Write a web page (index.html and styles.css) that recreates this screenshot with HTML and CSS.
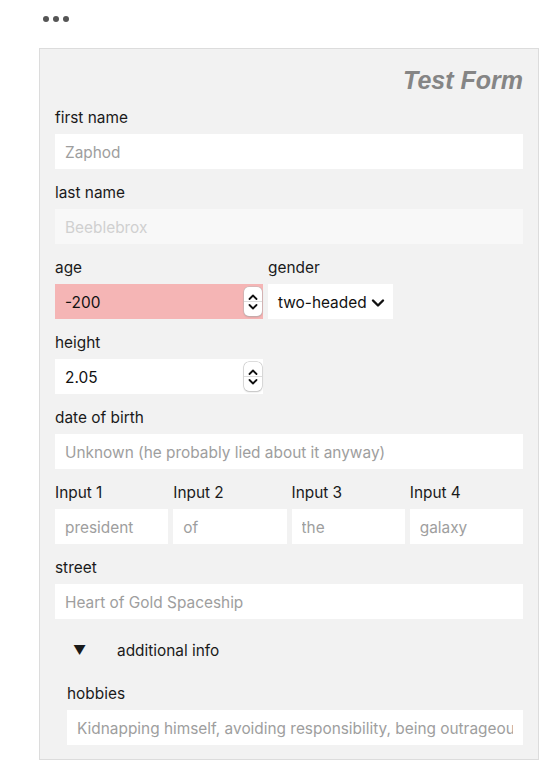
FILE: index.html
```html
<!DOCTYPE html>
<html>
<head>
<meta charset="utf-8">
<link rel="stylesheet" href="styles.css">
</head>
<body>
<div class="dots"><span></span><span></span><span></span></div>
<form class="panel">
  <h1 class="title">Test Form</h1>
  <div class="field">
    <label class="label">first name</label>
    <input class="input" placeholder="Zaphod">
  </div>
  <div class="field">
    <label class="label">last name</label>
    <input class="input disabled" placeholder="Beeblebrox" disabled>
  </div>
  <div class="row">
    <div class="field">
      <label class="label">age</label>
      <div class="numwrap">
        <input class="input num error" value="-200">
        <span class="spinner"><svg width="12" height="24" viewBox="0 0 12 24"><path d="M2.5 9 6 5.5 9.5 9" fill="none" stroke="#111" stroke-width="1.8" stroke-linecap="round" stroke-linejoin="round"/><path d="M2.5 15 6 18.5 9.5 15" fill="none" stroke="#111" stroke-width="1.8" stroke-linecap="round" stroke-linejoin="round"/></svg></span>
      </div>
    </div>
    <div class="field">
      <label class="label">gender</label>
      <div class="select"><span>two-headed</span><svg width="14" height="10" viewBox="0 0 14 10"><path d="M2 2.5 7 7.5 12 2.5" fill="none" stroke="#111" stroke-width="2.4" stroke-linecap="round" stroke-linejoin="round"/></svg></div>
    </div>
  </div>
  <div class="field">
    <label class="label">height</label>
    <div class="numwrap">
      <input class="input num" value="2.05">
      <span class="spinner"><svg width="12" height="24" viewBox="0 0 12 24"><path d="M2.5 9 6 5.5 9.5 9" fill="none" stroke="#111" stroke-width="1.8" stroke-linecap="round" stroke-linejoin="round"/><path d="M2.5 15 6 18.5 9.5 15" fill="none" stroke="#111" stroke-width="1.8" stroke-linecap="round" stroke-linejoin="round"/></svg></span>
    </div>
  </div>
  <div class="field">
    <label class="label">date of birth</label>
    <input class="input" placeholder="Unknown (he probably lied about it anyway)">
  </div>
  <div class="quad">
    <div class="field"><label class="label">Input 1</label><input class="input" placeholder="president"></div>
    <div class="field"><label class="label">Input 2</label><input class="input" placeholder="of"></div>
    <div class="field"><label class="label">Input 3</label><input class="input" placeholder="the"></div>
    <div class="field"><label class="label">Input 4</label><input class="input" placeholder="galaxy"></div>
  </div>
  <div class="field">
    <label class="label">street</label>
    <input class="input" placeholder="Heart of Gold Spaceship">
  </div>
  <div class="details">
    <div class="summary"><span class="tri">▼</span><span>additional info</span></div>
    <div class="field last">
      <label class="label">hobbies</label>
      <input class="input" placeholder="Kidnapping himself, avoiding responsibility, being outrageous">
    </div>
  </div>
</form>
</body>
</html>
```
FILE: styles.css
```css
* { box-sizing: border-box; }
body {
  margin: 0;
  background: #fff;
  font-family: Inter, "Noto Sans", sans-serif;
  color: #1a1a1a;
}
.dots {
  display: flex;
  gap: 4px;
  padding: 16px 0 0 43px;
  height: 48px;
}
.dots span {
  width: 6px;
  height: 6px;
  border-radius: 50%;
  background: #555;
}
.panel {
  margin: 0 0 0 39px;
  width: 500px;
  background: #f2f2f2;
  border: 1px solid #dcdcdc;
  padding: 0 15px 14px 15px;
}
.title {
  margin: 0;
  text-align: right;
  font-family: "Liberation Sans", Arial, sans-serif;
  font-style: italic;
  font-weight: bold;
  font-size: 25px;
  color: #858585;
  height: 59px;
  padding-top: 17px;
  line-height: 28px;
}
.field {
  display: flex;
  flex-direction: column;
  margin-bottom: 14px;
}
.label {
  font-size: 15.4px;
  line-height: 18px;
  height: 18px;
  margin-top: 1px;
  margin-bottom: 7px;
  color: #1a1a1a;
  white-space: nowrap;
}
.input {
  height: 35px;
  border: none;
  outline: none;
  background: #fff;
  padding: 2px 10px 0 10px;
  font-family: Inter, "Noto Sans", sans-serif;
  font-size: 15.4px;
  color: #111;
  width: 100%;
}
.input::placeholder { color: #9e9e9e; }
.input.disabled { background: #f8f8f8; }
.input.disabled::placeholder { color: #d0d0d0; }
.input.error { background: #f5b5b5; }
.row {
  display: flex;
  gap: 5px;
}
.row > .field:first-child { width: 208px; }
.numwrap {
  position: relative;
  width: 208px;
}
.spinner {
  position: absolute;
  right: 1px;
  top: 3px;
  width: 18px;
  height: 29px;
  background: #fff;
  border-radius: 5px;
  box-shadow: 0 0 0 0.5px #bbb, 0 1px 2px rgba(0,0,0,0.2);
  display: flex;
  align-items: center;
  justify-content: center;
}
.spinner::after {
  content: "";
  position: absolute;
  left: 0;
  right: 0;
  top: 14px;
  height: 1px;
  background: #ddd;
}
.select {
  height: 35px;
  width: 125px;
  background: #fff;
  display: flex;
  align-items: center;
  padding: 2px 6px 0 10px;
  gap: 4px;
  font-size: 15.4px;
  color: #111;
  white-space: nowrap;
}
.quad {
  display: grid;
  grid-template-columns: repeat(4, 1fr);
  gap: 5px;
}
.details {
  padding-left: 12px;
}
.summary {
  display: flex;
  align-items: center;
  height: 34px;
  margin-top: 2px;
  margin-bottom: 17px;
  font-size: 15.4px;
}
.tri {
  font-size: 13px;
  width: 50px;
  padding-left: 6px;
}
.field.last { margin-bottom: 0; }
.field.last .input { white-space: nowrap; overflow: hidden; }
```
